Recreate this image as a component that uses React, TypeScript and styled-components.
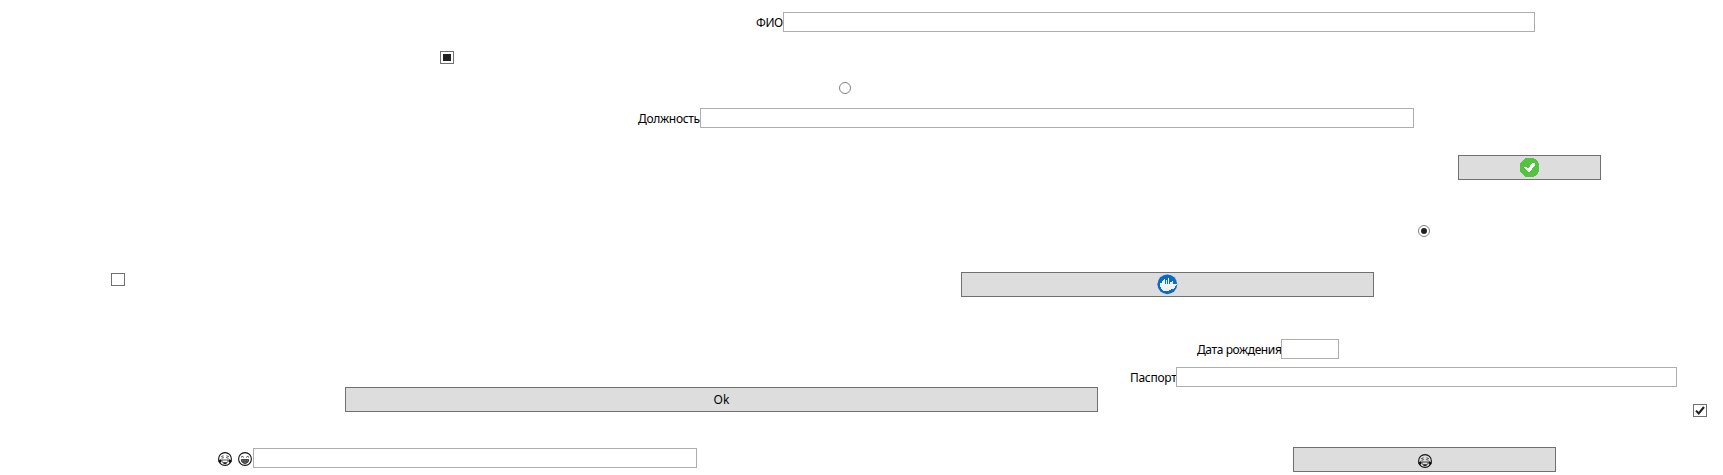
import React from "react";
import styled, { createGlobalStyle } from "styled-components";

const GlobalStyle = createGlobalStyle`
  * { box-sizing: border-box; }
  html, body { margin: 0; padding: 0; background: #fff; overflow: hidden; }
  body { font: 12px/16px "Noto Sans", "Open Sans", sans-serif; color: #000; }
`;

const Form = styled.main`
  display: flex;
  flex-direction: column;
  width: 1723px;
  height: 475px;
`;

const Row = styled.div<{ $top?: number; $left?: number; $height: number }>`
  display: flex;
  align-items: flex-start;
  flex: none;
  margin-top: ${(p) => p.$top ?? 0}px;
  padding-left: ${(p) => p.$left ?? 0}px;
  height: ${(p) => p.$height}px;
`;

const Column = styled.div<{ $width: number }>`
  display: flex;
  flex-direction: column;
  flex: none;
  width: ${(p) => p.$width}px;
`;

const Field = styled.label`
  display: flex;
  align-items: flex-start;
  flex: none;
`;

const Caption = styled.span<{ $width: number; $spacing?: number }>`
  width: ${(p) => p.$width}px;
  padding-top: 3px;
  white-space: nowrap;
  letter-spacing: ${(p) => p.$spacing ?? 0}px;
`;

const Input = styled.input<{ $width: number }>`
  width: ${(p) => p.$width}px;
  height: 20px;
  margin: 0;
  padding: 0 3px;
  border: 1px solid #abadb3;
  border-radius: 0;
  background: #fff;
  font: inherit;
  outline: none;
`;

const Button = styled.button<{ $width: number; $left?: number }>`
  display: flex;
  align-items: center;
  justify-content: center;
  flex: none;
  width: ${(p) => p.$width}px;
  height: 25px;
  margin: 0 0 0 ${(p) => p.$left ?? 0}px;
  padding: 0;
  border: 1px solid #707070;
  background: #ddd;
  color: #000;
  font: inherit;
`;

const CheckFrame = styled.span<{ $top?: number }>`
  display: flex;
  align-items: center;
  justify-content: center;
  flex: none;
  width: 14px;
  height: 13px;
  margin-top: ${(p) => p.$top ?? 0}px;
  border: 1px solid #707070;
  background: #fff;
`;

const Mixed = styled.span`
  width: 8px;
  height: 7px;
  background: #212121;
`;

const RadioFrame = styled.span`
  display: flex;
  align-items: center;
  justify-content: center;
  flex: none;
  width: 12px;
  height: 12px;
  border: 1px solid #808080;
  border-radius: 50%;
`;

const Dot = styled.span`
  width: 6px;
  height: 6px;
  border-radius: 50%;
  background: #212121;
`;

const Faces = styled.span`
  display: flex;
  gap: 6px;
  width: 35px;
  padding-top: 4px;
`;

const FaceSlot = styled.span`
  display: flex;
  padding-top: 2px;
`;

const Tick = () => (
  <svg width="12" height="11" viewBox="0 0 12 11">
    <path d="M2 5.600 4.700 8.500 10 2" fill="none" stroke="#212121" strokeWidth="2.1" />
  </svg>
);

const AcceptIcon = () => (
  <svg width="19" height="19" viewBox="0 0 19 19" shapeRendering="crispEdges">
    <path d="M6 0h7l2 1 3 3 1 2v7l-1 2-3 3-2 1H6l-2-1-3-3-1-2V6l1-2 3-3z" fill="#56c243" />
    <path d="M4 9h2l2 2 4-6h3v2l-5 7H8l-4-4z" fill="#fff" />
  </svg>
);

const CityIcon = () => (
  <svg width="21" height="21" viewBox="0 0 21 21">
    <circle cx="10.3" cy="10.3" r="9.9" fill="#0b6ac4" />
    <path
      d="M3 9h2V7h1V6h1V5h1v5h1V6h1v4h1V4h1v6h1V8h2V7h1v3h4v1h-1v1h-1v2h-1v1h-3v1h-2v1H6v-1H5v-1H4v-2H3z"
      fill="#f0f3f6"
      shapeRendering="crispEdges"
    />
  </svg>
);

const JoyFace = () => (
  <svg width="14" height="14" viewBox="0 0 14 14">
    <circle cx="7" cy="7" r="6.4" fill="none" stroke="#111" strokeWidth="1.1" />
    <path d="M3.200 4.600 5.600 3.800M8.400 3.800l2.400.8M3.500 6.300l2.300-.8M8.200 5.500l2.300.8" fill="none" stroke="#222" strokeWidth=".8" />
    <path d="M3.800 8h6.400c0 2-1.200 3.400-3.200 3.400S3.800 10 3.800 8z" fill="none" stroke="#222" strokeWidth=".8" />
    <path d="M5 10.300h4L8 12H6z" fill="#222" />
    <path d="M.3 8.500 3.300 7v2.500Q2.700 11.200 1.400 10.800.1 10 .3 8.500zM13.700 8.500 10.700 7v2.500q.6 1.700 1.900 1.300 1.300-.8 1.100-2.300z" fill="#111" />
  </svg>
);

const GrinFace = () => (
  <svg width="14" height="14" viewBox="0 0 14 14">
    <circle cx="7" cy="7" r="6.400" fill="none" stroke="#111" strokeWidth="1.1" />
    <path d="M3 5.300q1.300-1.700 2.800 0M8.200 5.300q1.500-1.700 2.800 0" fill="none" stroke="#222" strokeWidth=".9" />
    <path d="M3.300 7.500h7.400c0 2.500-1.500 3.900-3.700 3.900s-3.700-1.400-3.700-3.900z" fill="#777" stroke="#222" strokeWidth=".8" />
    <path d="M3.600 9.300h6.800M5.500 8v3M7 8v3.300M8.500 8v3" stroke="#333" strokeWidth=".5" />
  </svg>
);

export default function App() {
  return (
    <>
      <GlobalStyle />
      <Form>
        <Row $top={12} $left={756} $height={20}>
          <Field>
            <Caption $width={27} $spacing={-0.4}>ФИО</Caption>
            <Input $width={752} />
          </Field>
        </Row>
        <Row $top={19} $left={440} $height={13}>
          <CheckFrame><Mixed /></CheckFrame>
        </Row>
        <Row $top={18} $left={839} $height={12}>
          <RadioFrame />
        </Row>
        <Row $top={14} $left={638} $height={20}>
          <Field>
            <Caption $width={62} $spacing={-0.3}>Должность</Caption>
            <Input $width={714} />
          </Field>
        </Row>
        <Row $top={27} $left={1458} $height={25}>
          <Button $width={143}><AcceptIcon /></Button>
        </Row>
        <Row $top={45} $left={1418} $height={12}>
          <RadioFrame><Dot /></RadioFrame>
        </Row>
        <Row $top={35} $left={111} $height={25}>
          <CheckFrame $top={1} />
          <Button $left={836} $width={413}><CityIcon /></Button>
        </Row>
        <Row $top={42} $left={345} $height={78}>
          <Column $width={785}>
            <Row $top={48} $height={25}>
              <Button $width={753}>Ok</Button>
            </Row>
          </Column>
          <Column $width={593}>
            <Row $left={67} $height={20}>
              <Field>
                <Caption $width={84} $spacing={-0.4}>Дата рождения</Caption>
                <Input $width={58} />
              </Field>
            </Row>
            <Row $top={8} $height={20}>
              <Field>
                <Caption $width={46} $spacing={-0.3}>Паспорт</Caption>
                <Input $width={501} />
              </Field>
            </Row>
            <Row $top={17} $left={563} $height={13}>
              <CheckFrame><Tick /></CheckFrame>
            </Row>
          </Column>
        </Row>
        <Row $top={30} $left={218} $height={25}>
          <Row $top={1} $height={20}>
            <Field>
              <Faces><JoyFace /><GrinFace /></Faces>
              <Input $width={444} />
            </Field>
          </Row>
          <Button $left={596} $width={263}>
            <FaceSlot><JoyFace /></FaceSlot>
          </Button>
        </Row>
      </Form>
    </>
  );
}
